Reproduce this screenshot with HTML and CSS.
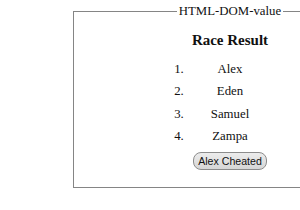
FILE: index.html
```html
<!DOCTYPE html>
<html>
    <head>
        <meta charset="UTF-8" />
        <title>HTML DOM value</title>
        <link rel="stylesheet" href="styles.css">
    </head>
    <body>
        <fieldset class="box">
            <legend>HTML-DOM-value</legend>
            <h3>Race Result</h3>
            <ol class="results">
                <li>Alex</li>
                <li>Eden</li>
                <li>Samuel</li>
                <li>Zampa</li>
            </ol>
            <button class="cheat">Alex Cheated</button>
        </fieldset>
    </body>
</html>
```

FILE: styles.css
```css
html {
    overflow: hidden;
}

body {
    margin: 0;
    font-family: "Liberation Serif", "Times New Roman", serif;
    font-size: 12.8px;
    color: #111;
    text-align: center;
}

.box {
    width: 314px;
    margin: 4px 0 0 73px;
    padding: 4px 0 17px;
    border: 1px solid #858585;
    box-sizing: border-box;
}

.box legend {
    margin: 0 auto;
    padding: 0 2px;
}

h3 {
    font-size: 15px;
    margin: 9px 0 13px;
}

.results {
    width: 86px;
    margin: 0 auto;
    padding: 0;
}

.results li {
    line-height: 15px;
    margin-bottom: 7.3px;
}

.cheat {
    font-family: "Liberation Sans", Arial, sans-serif;
    font-size: 10.6px;
    height: 18px;
    padding: 0 4px;
    margin-top: 1px;
    border: 1px solid #8c8c8c;
    border-radius: 8px;
    background: linear-gradient(#ececec, #d6d6d6);
    color: #111;
}
```
